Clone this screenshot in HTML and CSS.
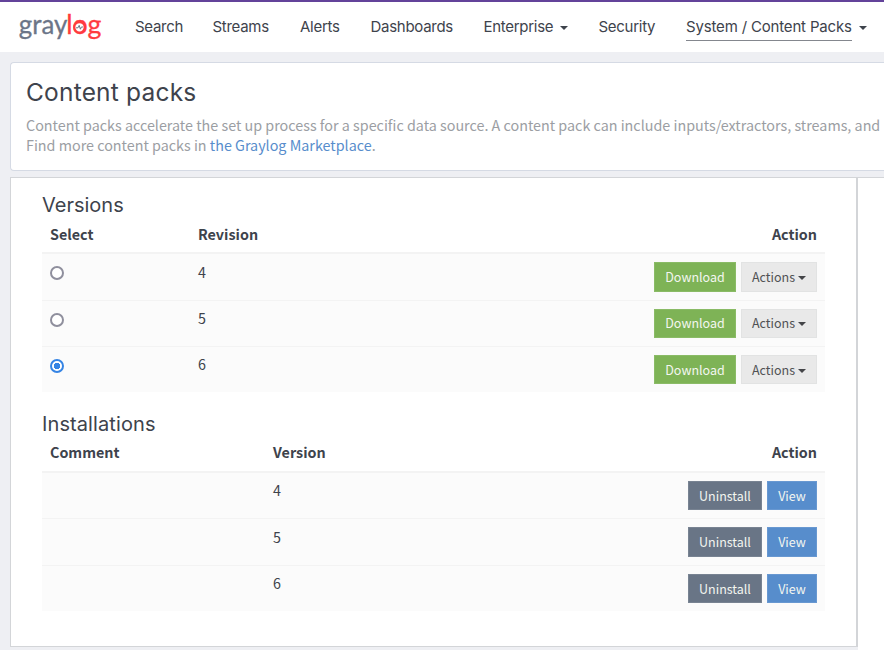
FILE: index.html
```
<!DOCTYPE html>
<html lang="en">
<head>
<meta charset="utf-8">
<title>Content packs</title>
<link rel="stylesheet" href="styles.css">
</head>
<body>
<header class="navbar">
  <svg class="logo" width="90" height="40" viewBox="0 0 90 40" aria-label="graylog">
    <text class="logo-gray" x="-0.2" y="24" textLength="48.5" lengthAdjust="spacingAndGlyphs">gray</text>
    <text class="logo-red" x="47.2" y="24" textLength="35.3" lengthAdjust="spacingAndGlyphs">log</text>
    <circle class="logo-ring" cx="60.5" cy="17.3" r="5.3"/>
    <path class="logo-pulse" d="M57 17.8h2l1.2-2.4 1.2 3.8 1-2.2h1.6"/>
  </svg>
  <nav class="menu">
    <a class="i-search">Search</a>
    <a class="i-streams">Streams</a>
    <a class="i-alerts">Alerts</a>
    <a class="i-dash">Dashboards</a>
    <a class="i-ent">Enterprise</a>
    <a class="i-sec">Security</a>
    <a class="i-sys active">System / Content Packs</a>
  </nav>
</header>

<section class="intro">
  <h1>Content packs</h1>
  <p>Content packs accelerate the set up process for a specific data source. A content pack can include inputs/extractors, streams, and</p>
  <p>Find more content packs in <a>the Graylog Marketplace</a>.</p>
</section>

<main class="columns">
  <section class="panel">
    <h2 class="t-versions">Versions</h2>
    <div class="table versions">
      <div class="head"><b>Select</b><b>Revision</b><b class="end">Action</b></div>
      <div class="row"><i class="radio"></i><span>4</span><div class="actions"><button class="btn download">Download</button><button class="btn more">Actions<i class="caret"></i></button></div></div>
      <div class="row"><i class="radio"></i><span>5</span><div class="actions"><button class="btn download">Download</button><button class="btn more">Actions<i class="caret"></i></button></div></div>
      <div class="row"><i class="radio checked"></i><span>6</span><div class="actions"><button class="btn download">Download</button><button class="btn more">Actions<i class="caret"></i></button></div></div>
    </div>
    <h2 class="t-install">Installations</h2>
    <div class="table installs">
      <div class="head"><b>Comment</b><b>Version</b><b class="end">Action</b></div>
      <div class="row"><span></span><span>4</span><div class="actions"><button class="btn uninstall">Uninstall</button><button class="btn view">View</button></div></div>
      <div class="row"><span></span><span>5</span><div class="actions"><button class="btn uninstall">Uninstall</button><button class="btn view">View</button></div></div>
      <div class="row"><span></span><span>6</span><div class="actions"><button class="btn uninstall">Uninstall</button><button class="btn view">View</button></div></div>
    </div>
  </section>
  <aside class="side"></aside>
</main>
</body>
</html>
```
FILE: styles.css
```
* { box-sizing: border-box; }
html, body { margin: 0; padding: 0; }
body {
  width: 884px;
  height: 650px;
  overflow: hidden;
  background: #eeeff3;
  color: #3e434c;
  font-family: "Noto Sans CJK SC", "Noto Sans", sans-serif;
  font-size: 14.33px;
  line-height: 20px;
}
h1, h2, p { margin: 0; }
h1, h2, .menu { font-family: Inter, "Open Sans", sans-serif; font-weight: 400; }

.navbar {
  display: flex;
  height: 52px;
  border-top: 2px solid #63439a;
  background: #fff;
}
.logo { margin: 8px 0 0 19px; flex: none; overflow: visible; }
.logo text { font-family: Lato, sans-serif; font-size: 27px; stroke-width: .3; }
.logo-gray { fill: #6b7588; stroke: #6b7588; }
.logo-red { fill: #ff3b3f; stroke: #ff3b3f; }
.logo-ring { fill: #fff; stroke: #ff3b3f; stroke-width: 2.3; }
.logo-pulse { fill: none; stroke: #6b7588; stroke-width: 1; }
.menu {
  display: flex;
  gap: 30px;
  margin-left: 26px;
  padding-top: 14px;
  font-size: 15px;
  line-height: 22px;
  letter-spacing: -.28px;
  white-space: nowrap;
}
.menu a { flex: none; height: 25px; }
.i-search { width: 47.5px; }
.i-streams { width: 57.5px; }
.i-alerts { width: 40.5px; }
.i-dash { width: 83px; }
.i-ent { width: 85px; }
.i-sec { width: 57.5px; }
.i-sys { width: 166px; letter-spacing: -.17px; }
.menu .active { border-bottom: 1px solid #84878e; }
.i-ent::after, .i-sys::after {
  content: "";
  display: inline-block;
  margin-left: 7px;
  vertical-align: 2px;
  border: 4px solid transparent;
  border-top-color: #3e434c;
  border-bottom: 0;
}

.intro {
  height: 109px;
  margin: 10px 0 0 10px;
  padding: 14px 0 14px 15px;
  border: 1px solid #d5dae4;
  border-right: 0;
  border-radius: 4px 0 0 4px;
  background: #fff;
  color: #9b9ea3;
  white-space: nowrap;
}
.intro h1 {
  height: 38px;
  color: #3e434c;
  font-size: 24.5px;
  line-height: 30px;
  letter-spacing: .2px;
}
.intro a { color: #578dcc; }

.columns { display: flex; margin: 6px 0 0 10px; height: 473px; }
.panel {
  width: 848px;
  height: 470px;
  padding: 14px 31px 0;
  border: 1px solid #d3d5d8;
  border-right-width: 2px;
  background: #fff;
}
.side { flex: 1; border-top: 1px solid #d3d5d8; background: #fff; }
h2 { font-size: 20px; line-height: 26px; height: 28px; }
.t-install { margin-top: 19px; letter-spacing: .1px; }
.table { width: 783px; }
.head, .row { display: grid; padding: 0 8px; }
.versions .head, .versions .row { grid-template-columns: 148px 1fr auto; }
.installs .head, .installs .row { grid-template-columns: 223px 1fr auto; }
.head { height: 34px; padding-top: 4px; border-bottom: 2px solid #f3f3f3; }
.installs .head { padding-top: 3px; }
.head b { font-weight: 700; }
.row { height: 46px; padding-top: 8px; background: #fbfbfb; align-items: start; }
.row + .row { border-top: 1px solid #f3f3f3; }
.row span { margin-top: -1px; }
.versions .row:nth-child(2) span { margin-top: 0; }
.installs .row:nth-child(2) { height: 45px; }
.installs .row:nth-child(3) { height: 47px; }
.installs .row:nth-child(3) span { margin-top: 0; }
.actions { display: flex; gap: 5px; }
.btn {
  height: 29px;
  padding: 0;
  border: 1px solid;
  border-radius: 0;
  font: 12.5px/27px "Noto Sans CJK SC", sans-serif;
  color: #f3f6f0;
}
.versions .row:nth-child(2) .btn, .installs .row:nth-child(3) .btn { height: 30px; padding-bottom: 2px; }
.versions .row:nth-child(3) .btn { padding-bottom: 2px; line-height: 25px; }
.download { width: 82px; background: #7eb356; border-color: #8abb66; }
.more { width: 76px; background: #e9e9e9; border-color: #e2e3e3; color: #505154; }
.uninstall { width: 74px; background: #697586; border-color: #788392; }
.view { width: 50px; background: #578dcc; border-color: #6898d1; }
.caret {
  display: inline-block;
  margin-left: 3px;
  vertical-align: 2px;
  border: 4px solid transparent;
  border-top-color: #444548;
  border-bottom: 0;
}
.radio {
  width: 14px;
  height: 14px;
  margin-top: 4px;
  border: 2px solid #8f8f9d;
  border-radius: 50%;
  background: #fff;
}
.radio.checked { border-color: #3584e4; background: radial-gradient(circle, #3584e4 0 3px, #fff 3.5px); }
```
